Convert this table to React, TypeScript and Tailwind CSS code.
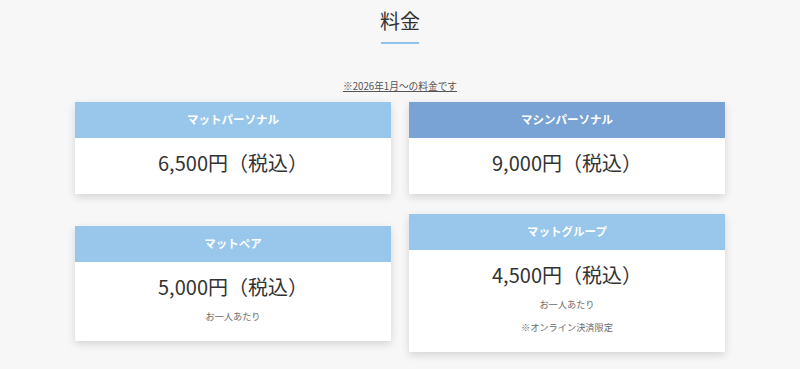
import React from "react";

type Plan = {
  name: string;
  price: string;
  header: string;
  notes: string[];
};

const plans: Plan[] = [
  { name: "マットパーソナル", price: "6,500", header: "bg-[#98c7eb]", notes: [] },
  { name: "マシンパーソナル", price: "9,000", header: "bg-[#79a3d4]", notes: [] },
  { name: "マットペア", price: "5,000", header: "bg-[#98c7eb]", notes: ["お一人あたり"] },
  { name: "マットグループ", price: "4,500", header: "bg-[#98c7eb]", notes: ["お一人あたり", "※オンライン決済限定"] },
];

function Card({ plan }: { plan: Plan }) {
  return (
    <div className="bg-white shadow-[0_3px_8px_rgba(0,0,0,0.14)]">
      <div className={`${plan.header} h-[36px] flex items-center justify-center text-white font-bold text-[11.5px]`}>
        {plan.name}
      </div>
      <div className="pt-[9px] pb-[15px] text-center">
        <div className="text-[20px] leading-[32px] text-[#333]">
          {plan.price}円（税込）
        </div>
        {plan.notes.map((n) => (
          <div key={n} className="mt-[3px] text-[9.2px] leading-[20px] text-[#6b6b6b]">
            {n}
          </div>
        ))}
      </div>
    </div>
  );
}

export default function App() {
  return (
    <div
      className="w-full min-h-[369px] bg-[#f7f7f7] flex flex-col items-center"
      style={{ fontFamily: '"Noto Sans CJK JP", "Noto Sans", sans-serif' }}
    >
      <h1 className="pt-[6px] text-[20px] leading-[30px] text-[#333] font-normal">料金</h1>
      <div className="mt-[6px] w-[38px] h-[2px] bg-[#8fc3ea]" />
      <p className="mt-[34px] text-[9.7px] leading-[16px] text-[#555] underline">
        ※2026年1月～の料金です
      </p>
      <div className="mt-[8px] w-[650px] grid grid-cols-2 gap-x-[18px] gap-y-[20px] items-center">
        {plans.map((p) => (
          <Card key={p.name} plan={p} />
        ))}
      </div>
    </div>
  );
}
